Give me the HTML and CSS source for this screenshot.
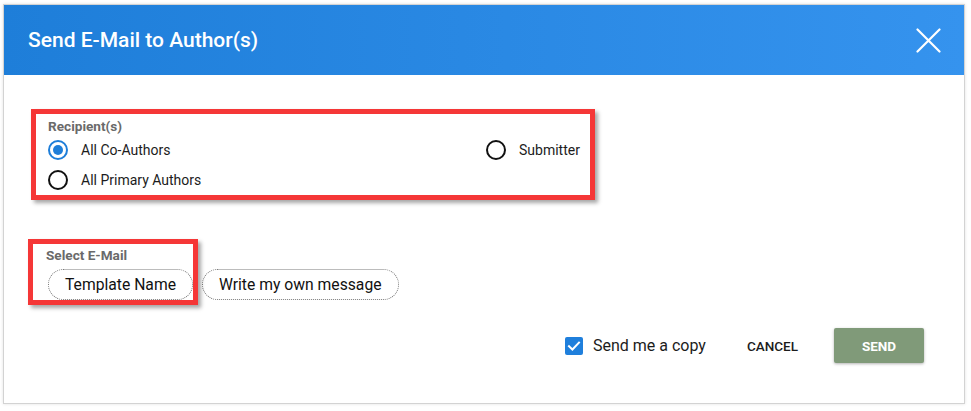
FILE: index.html
```html
<!DOCTYPE html>
<html lang="en">
<head>
<meta charset="utf-8">
<title>Send E-Mail to Author(s)</title>
<link rel="stylesheet" href="styles.css">
</head>
<body>
<div class="dialog">
  <header class="dlg-head">
    <h1 class="dlg-title">Send E-Mail to Author(s)</h1>
    <span class="close" aria-label="Close">
      <svg width="25" height="25" viewBox="0 0 25 25"><path d="M1.5 1.5 L23.5 23.5 M23.5 1.5 L1.5 23.5" stroke="#fff" stroke-width="2.2" stroke-linecap="round" fill="none"/></svg>
    </span>
  </header>
  <div class="dlg-body">
    <section class="recipients">
      <div class="field-label">Recipient(s)</div>
      <div class="radio-grid">
        <div class="radio checked"><span class="radio-dot"></span><span class="radio-text">All Co-Authors</span></div>
        <div class="radio"><span class="radio-dot"></span><span class="radio-text">Submitter</span></div>
        <div class="radio"><span class="radio-dot"></span><span class="radio-text">All Primary Authors</span></div>
      </div>
    </section>
    <section class="select-email">
      <div class="field-label select-label">Select E-Mail</div>
      <div class="pills">
        <span class="pill">Template Name</span>
        <span class="pill">Write my own message</span>
      </div>
    </section>
    <div class="footer">
      <div class="copy">
        <span class="checkbox"><svg width="18" height="18" viewBox="0 0 18 18"><path d="M4 9.2 L7.4 12.5 L14 5.6" stroke="#fff" stroke-width="2" fill="none" stroke-linecap="square"/></svg></span>
        <span class="copy-text">Send me a copy</span>
      </div>
      <span class="btn-cancel">CANCEL</span>
      <span class="btn-send">SEND</span>
    </div>
  </div>
</div>
<div class="mark mark-recipients"></div>
<div class="mark mark-select"></div>
</body>
</html>
```

FILE: styles.css
```css
html, body {
  margin: 0;
  padding: 0;
  background: #ffffff;
}
body {
  font-family: Roboto, "Liberation Sans", Arial, sans-serif;
  color: #1c1c1c;
  position: relative;
  width: 971px;
  height: 411px;
  overflow: hidden;
}
.dialog {
  margin: 4px 0 0 3px;
  width: 960px;
  border: 1px solid #d3d3d3;
  background: #fff;
  box-shadow: 0 0 3px rgba(0,0,0,0.12);
}
.dlg-head {
  height: 70px;
  display: flex;
  align-items: center;
  justify-content: space-between;
  padding: 0 23px 0 24px;
  background: linear-gradient(to right, #1e7ed9, #3593ee);
}
.dlg-title {
  margin: 0;
  font-size: 21px;
  font-weight: 500;
  color: #fff;
  line-height: 24px;
}
.close {
  display: flex;
  width: 25px;
  height: 25px;
}
.dlg-body {
  padding: 43px 40px 40px 44px;
}
.field-label {
  font-size: 13.6px;
  font-weight: 700;
  color: #6a6a6a;
  line-height: 17px;
}
.radio-grid {
  display: grid;
  grid-template-columns: 438px auto;
  grid-auto-rows: 30px;
  align-items: center;
}
.radio {
  display: flex;
  align-items: center;
  gap: 13px;
  font-size: 14px;
  color: #1c1c1c;
}
.radio-dot {
  width: 20px;
  height: 20px;
  box-sizing: border-box;
  border: 2px solid #111;
  border-radius: 50%;
  display: flex;
  align-items: center;
  justify-content: center;
}
.radio.checked .radio-dot {
  border-color: #1e7ed9;
}
.radio.checked .radio-dot::after {
  content: "";
  width: 10px;
  height: 10px;
  border-radius: 50%;
  background: #1e7ed9;
}
.select-email {
  margin-top: 52px;
}
.select-label {
  margin-left: -2px;
}
.pills {
  display: flex;
  gap: 9px;
  margin-top: 5px;
}
.pill {
  height: 31px;
  box-sizing: border-box;
  border: 1px dotted #7a7a7a;
  border-radius: 16px;
  padding: 0 16px;
  display: flex;
  align-items: center;
  font-size: 15.7px;
  color: #111;
}
.footer {
  margin-top: 28px;
  height: 35px;
  display: flex;
  align-items: center;
  justify-content: flex-end;
}
.copy {
  display: flex;
  align-items: center;
  gap: 10px;
  margin-right: 41px;
}
.checkbox {
  width: 18px;
  height: 18px;
  border-radius: 2px;
  background: #1f7fdc;
  display: flex;
}
.copy-text {
  font-size: 16px;
  color: #1c1c1c;
}
.btn-cancel {
  font-size: 13.5px;
  font-weight: 500;
  color: #1c1c1c;
  margin-right: 36px;
}
.btn-send {
  width: 90px;
  height: 35px;
  display: flex;
  align-items: center;
  justify-content: center;
  background: #809a79;
  color: #fff;
  font-size: 13.5px;
  font-weight: 700;
  border-radius: 2px;
  box-shadow: 0 1px 3px rgba(0,0,0,0.3);
}
.mark {
  position: absolute;
  box-sizing: border-box;
  border: 5px solid #f53737;
  box-shadow: 3px 3px 4px rgba(0,0,0,0.35);
}
.mark-recipients {
  left: 31px;
  top: 109px;
  width: 564px;
  height: 91px;
}
.mark-select {
  left: 28px;
  top: 239px;
  width: 170px;
  height: 66px;
}
```
